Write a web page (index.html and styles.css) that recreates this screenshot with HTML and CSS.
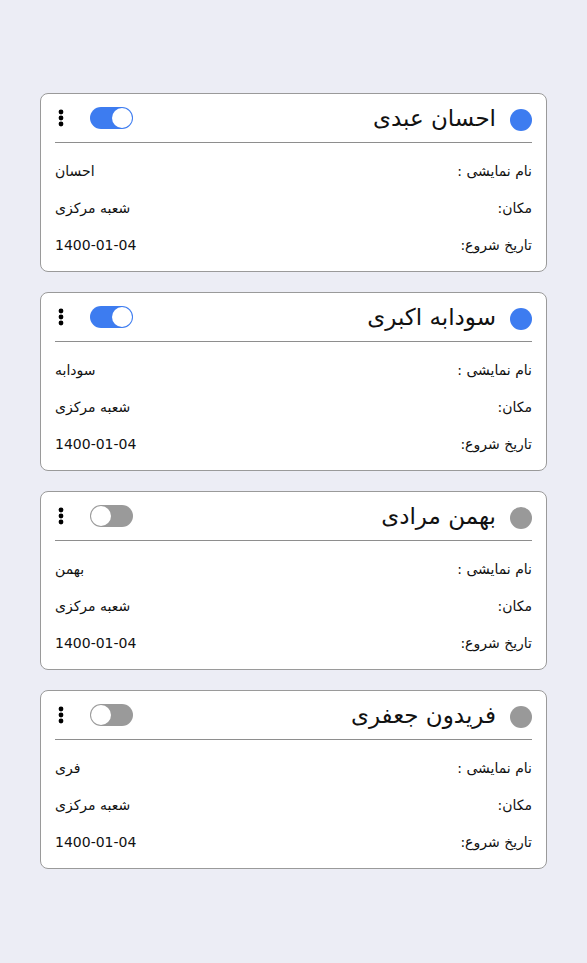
FILE: index.html
```html
<!DOCTYPE html>
<html lang="fa" dir="rtl">
<head>
<meta charset="utf-8">
<title>کاربران</title>
<link rel="stylesheet" href="styles.css">
</head>
<body>
<main class="list">
  <section class="card">
    <header class="head">
      <span class="status on"></span>
      <h2 class="name">احسان عبدی</h2>
      <div class="controls">
        <span class="toggle on"><span class="knob"></span></span>
        <svg class="kebab" width="6" height="18" viewBox="0 0 6 18"><circle cx="3" cy="3" r="2.4"/><circle cx="3" cy="9" r="2.4"/><circle cx="3" cy="15" r="2.4"/></svg>
      </div>
    </header>
    <div class="body">
      <div class="row"><span class="label">نام نمایشی :</span><span class="value">احسان</span></div>
      <div class="row"><span class="label">مکان:</span><span class="value">شعبه مرکزی</span></div>
      <div class="row"><span class="label">تاریخ شروع:</span><span class="value">1400-01-04</span></div>
    </div>
  </section>
  <section class="card">
    <header class="head">
      <span class="status on"></span>
      <h2 class="name">سودابه اکبری</h2>
      <div class="controls">
        <span class="toggle on"><span class="knob"></span></span>
        <svg class="kebab" width="6" height="18" viewBox="0 0 6 18"><circle cx="3" cy="3" r="2.4"/><circle cx="3" cy="9" r="2.4"/><circle cx="3" cy="15" r="2.4"/></svg>
      </div>
    </header>
    <div class="body">
      <div class="row"><span class="label">نام نمایشی :</span><span class="value">سودابه</span></div>
      <div class="row"><span class="label">مکان:</span><span class="value">شعبه مرکزی</span></div>
      <div class="row"><span class="label">تاریخ شروع:</span><span class="value">1400-01-04</span></div>
    </div>
  </section>
  <section class="card">
    <header class="head">
      <span class="status off"></span>
      <h2 class="name">بهمن مرادی</h2>
      <div class="controls">
        <span class="toggle off"><span class="knob"></span></span>
        <svg class="kebab" width="6" height="18" viewBox="0 0 6 18"><circle cx="3" cy="3" r="2.4"/><circle cx="3" cy="9" r="2.4"/><circle cx="3" cy="15" r="2.4"/></svg>
      </div>
    </header>
    <div class="body">
      <div class="row"><span class="label">نام نمایشی :</span><span class="value">بهمن</span></div>
      <div class="row"><span class="label">مکان:</span><span class="value">شعبه مرکزی</span></div>
      <div class="row"><span class="label">تاریخ شروع:</span><span class="value">1400-01-04</span></div>
    </div>
  </section>
  <section class="card">
    <header class="head">
      <span class="status off"></span>
      <h2 class="name">فریدون جعفری</h2>
      <div class="controls">
        <span class="toggle off"><span class="knob"></span></span>
        <svg class="kebab" width="6" height="18" viewBox="0 0 6 18"><circle cx="3" cy="3" r="2.4"/><circle cx="3" cy="9" r="2.4"/><circle cx="3" cy="15" r="2.4"/></svg>
      </div>
    </header>
    <div class="body">
      <div class="row"><span class="label">نام نمایشی :</span><span class="value">فری</span></div>
      <div class="row"><span class="label">مکان:</span><span class="value">شعبه مرکزی</span></div>
      <div class="row"><span class="label">تاریخ شروع:</span><span class="value">1400-01-04</span></div>
    </div>
  </section>
</main>
</body>
</html>
```

FILE: styles.css
```css
html, body {
  margin: 0;
  padding: 0;
  background: #ecedf5;
  font-family: "DejaVu Sans", "Noto Sans", sans-serif;
  color: #111;
}
.list {
  padding: 93px 40px 40px;
  display: flex;
  flex-direction: column;
  gap: 20px;
}
.card {
  background: #fff;
  border: 1px solid #9a9a9a;
  border-radius: 8px;
  padding: 0 14px;
}
.head {
  display: flex;
  align-items: center;
  height: 48px;
  border-bottom: 1px solid #8e8e8e;
}
.status {
  width: 22px;
  height: 22px;
  border-radius: 50%;
  flex: none;
  margin-top: 4px;
}
.status.on { background: #3d7cf0; }
.status.off { background: #999; }
.name {
  margin: 0 14px 0 0;
  font-size: 23px;
  font-weight: normal;
  line-height: 1;
}
.controls {
  margin-right: auto;
  display: flex;
  align-items: center;
  gap: 26px;
  padding-left: 3px;
}
.toggle {
  width: 43px;
  height: 22px;
  border-radius: 11px;
  display: flex;
  align-items: center;
  padding: 0 1px;
  box-sizing: border-box;
}
.toggle.on { background: #3d7cf0; justify-content: flex-start; }
.toggle.off { background: #9a9a9a; justify-content: flex-end; }
.knob {
  width: 20px;
  height: 20px;
  border-radius: 50%;
  background: #fff;
}
.kebab { fill: #000; display: block; }
.body {
  padding: 9px 0 8px;
}
.row {
  display: flex;
  justify-content: space-between;
  align-items: center;
  height: 37px;
  font-size: 14px;
}
```
